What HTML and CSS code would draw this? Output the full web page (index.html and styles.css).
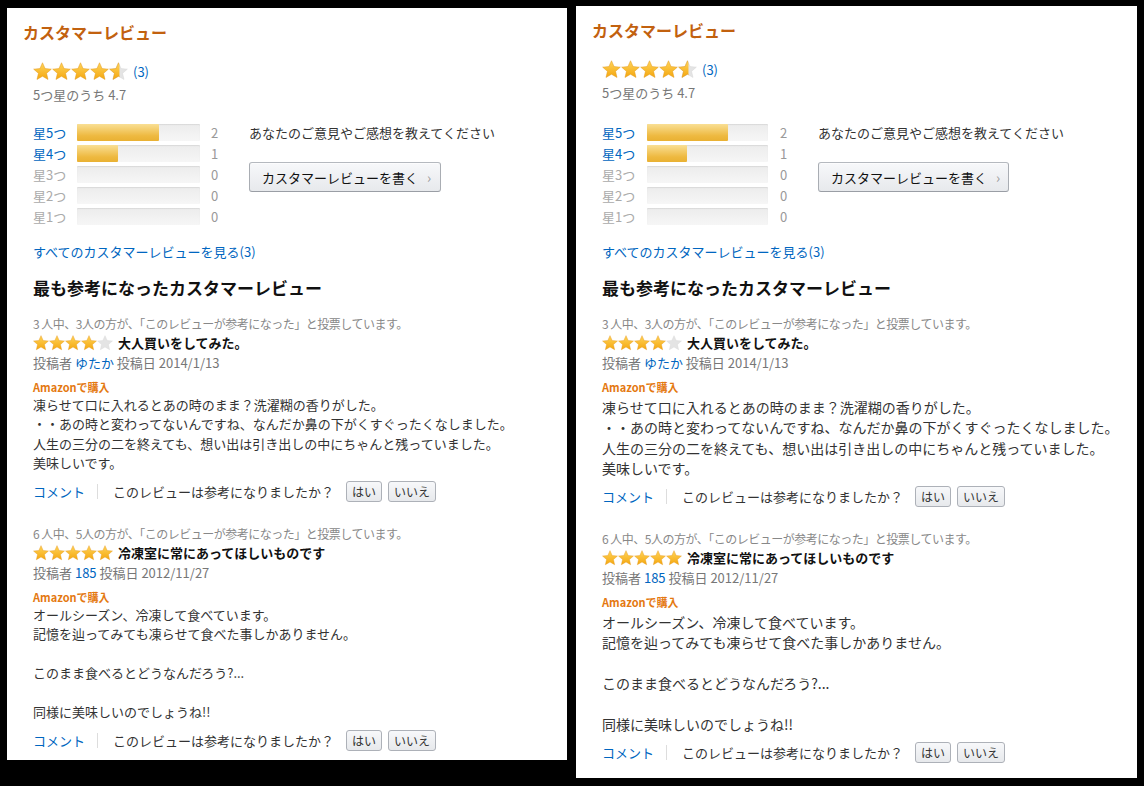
FILE: index.html
```html
<!DOCTYPE html>
<html lang="ja">
<head>
<meta charset="utf-8">
<title>カスタマーレビュー</title>
<link rel="stylesheet" href="styles.css">
</head>
<body>
<svg class="defs" width="0" height="0" aria-hidden="true">
  <defs>
    <linearGradient id="gold" x1="0" y1="0" x2="0" y2="1">
      <stop offset="0" stop-color="#ffd45a"/>
      <stop offset="1" stop-color="#f4a70f"/>
    </linearGradient>
    <clipPath id="halfclip" clipPathUnits="userSpaceOnUse"><rect x="80" y="0" width="11" height="20"/></clipPath>
    <polygon id="star" points="10,0.8 12.7,6.9 19.3,7.5 14.3,11.9 15.8,18.4 10,15 4.2,18.4 5.7,11.9 0.7,7.5 7.3,6.9"/>
  </defs>
</svg>
<div class="stage">
  <section class="panel panel-a">
    <h2 class="title">カスタマーレビュー</h2>
    <div class="content">
      <div class="summary">
        <svg class="stars-lg" width="95" height="19" viewBox="0 0 100 20">
          <use href="#star" class="on" x="0"/><use href="#star" class="on" x="20"/><use href="#star" class="on" x="40"/><use href="#star" class="on" x="60"/><use href="#star" class="off" x="80"/>
          <g clip-path="url(#halfclip)"><use href="#star" class="on" x="80"/></g>
        </svg>
        <a class="link count-link">(3)</a>
      </div>
      <div class="avg">5つ星のうち 4.7</div>
      <div class="hist">
        <div class="hist-table">
          <div class="hist-row"><a class="hist-label link">星5つ</a><div class="bar"><div class="bar-fill" style="width:66.7%"></div></div><span class="hist-count">2</span></div>
          <div class="hist-row"><a class="hist-label link">星4つ</a><div class="bar"><div class="bar-fill" style="width:33.3%"></div></div><span class="hist-count">1</span></div>
          <div class="hist-row"><span class="hist-label off-label">星3つ</span><div class="bar"></div><span class="hist-count">0</span></div>
          <div class="hist-row"><span class="hist-label off-label">星2つ</span><div class="bar"></div><span class="hist-count">0</span></div>
          <div class="hist-row"><span class="hist-label off-label">星1つ</span><div class="bar"></div><span class="hist-count">0</span></div>
        </div>
        <div class="hist-side">
          <p class="side-text">あなたのご意見やご感想を教えてください</p>
          <button class="write-btn">カスタマーレビューを書く<span class="chev">›</span></button>
        </div>
      </div>
      <a class="link all-link">すべてのカスタマーレビューを見る(3)</a>
      <h3 class="section-title">最も参考になったカスタマーレビュー</h3>

      <div class="review first">
        <div class="helpful">3 人中、3人の方が、「このレビューが参考になった」と投票しています。</div>
        <div class="review-head">
          <svg class="stars-sm" width="80" height="16" viewBox="0 0 100 20">
            <use href="#star" class="on" x="0"/><use href="#star" class="on" x="20"/><use href="#star" class="on" x="40"/><use href="#star" class="on" x="60"/><use href="#star" class="off" x="80"/>
          </svg>
          <span class="review-title">大人買いをしてみた。</span>
        </div>
        <div class="byline">投稿者 <a class="link">ゆたか</a> 投稿日 2014/1/13</div>
        <div class="verified">Amazonで購入</div>
        <p class="body">凍らせて口に入れるとあの時のまま？洗濯糊の香りがした。<br>・・あの時と変わってないんですね、なんだか鼻の下がくすぐったくなしました。<br>人生の三分の二を終えても、想い出は引き出しの中にちゃんと残っていました。<br>美味しいです。</p>
        <div class="review-foot"><a class="link">コメント</a><span class="sep"></span><span class="question">このレビューは参考になりましたか？</span><button class="vote">はい</button><button class="vote">いいえ</button></div>
      </div>

      <div class="review">
        <div class="helpful">6 人中、5人の方が、「このレビューが参考になった」と投票しています。</div>
        <div class="review-head">
          <svg class="stars-sm" width="80" height="16" viewBox="0 0 100 20">
            <use href="#star" class="on" x="0"/><use href="#star" class="on" x="20"/><use href="#star" class="on" x="40"/><use href="#star" class="on" x="60"/><use href="#star" class="on" x="80"/>
          </svg>
          <span class="review-title">冷凍室に常にあってほしいものです</span>
        </div>
        <div class="byline">投稿者 <a class="link">185</a> 投稿日 2012/11/27</div>
        <div class="verified">Amazonで購入</div>
        <p class="body">オールシーズン、冷凍して食べています。<br>記憶を辿ってみても凍らせて食べた事しかありません。<br><br>このまま食べるとどうなんだろう?...<br><br>同様に美味しいのでしょうね!!</p>
        <div class="review-foot"><a class="link">コメント</a><span class="sep"></span><span class="question">このレビューは参考になりましたか？</span><button class="vote">はい</button><button class="vote">いいえ</button></div>
      </div>
    </div>
  </section>

  <section class="panel panel-b">
    <h2 class="title">カスタマーレビュー</h2>
    <div class="content">
      <div class="summary">
        <svg class="stars-lg" width="95" height="19" viewBox="0 0 100 20">
          <use href="#star" class="on" x="0"/><use href="#star" class="on" x="20"/><use href="#star" class="on" x="40"/><use href="#star" class="on" x="60"/><use href="#star" class="off" x="80"/>
          <g clip-path="url(#halfclip)"><use href="#star" class="on" x="80"/></g>
        </svg>
        <a class="link count-link">(3)</a>
      </div>
      <div class="avg">5つ星のうち 4.7</div>
      <div class="hist">
        <div class="hist-table">
          <div class="hist-row"><a class="hist-label link">星5つ</a><div class="bar"><div class="bar-fill" style="width:66.7%"></div></div><span class="hist-count">2</span></div>
          <div class="hist-row"><a class="hist-label link">星4つ</a><div class="bar"><div class="bar-fill" style="width:33.3%"></div></div><span class="hist-count">1</span></div>
          <div class="hist-row"><span class="hist-label off-label">星3つ</span><div class="bar"></div><span class="hist-count">0</span></div>
          <div class="hist-row"><span class="hist-label off-label">星2つ</span><div class="bar"></div><span class="hist-count">0</span></div>
          <div class="hist-row"><span class="hist-label off-label">星1つ</span><div class="bar"></div><span class="hist-count">0</span></div>
        </div>
        <div class="hist-side">
          <p class="side-text">あなたのご意見やご感想を教えてください</p>
          <button class="write-btn">カスタマーレビューを書く<span class="chev">›</span></button>
        </div>
      </div>
      <a class="link all-link">すべてのカスタマーレビューを見る(3)</a>
      <h3 class="section-title">最も参考になったカスタマーレビュー</h3>

      <div class="review first">
        <div class="helpful">3 人中、3人の方が、「このレビューが参考になった」と投票しています。</div>
        <div class="review-head">
          <svg class="stars-sm" width="80" height="16" viewBox="0 0 100 20">
            <use href="#star" class="on" x="0"/><use href="#star" class="on" x="20"/><use href="#star" class="on" x="40"/><use href="#star" class="on" x="60"/><use href="#star" class="off" x="80"/>
          </svg>
          <span class="review-title">大人買いをしてみた。</span>
        </div>
        <div class="byline">投稿者 <a class="link">ゆたか</a> 投稿日 2014/1/13</div>
        <div class="verified">Amazonで購入</div>
        <p class="body">凍らせて口に入れるとあの時のまま？洗濯糊の香りがした。<br>・・あの時と変わってないんですね、なんだか鼻の下がくすぐったくなしました。<br>人生の三分の二を終えても、想い出は引き出しの中にちゃんと残っていました。<br>美味しいです。</p>
        <div class="review-foot"><a class="link">コメント</a><span class="sep"></span><span class="question">このレビューは参考になりましたか？</span><button class="vote">はい</button><button class="vote">いいえ</button></div>
      </div>

      <div class="review">
        <div class="helpful">6 人中、5人の方が、「このレビューが参考になった」と投票しています。</div>
        <div class="review-head">
          <svg class="stars-sm" width="80" height="16" viewBox="0 0 100 20">
            <use href="#star" class="on" x="0"/><use href="#star" class="on" x="20"/><use href="#star" class="on" x="40"/><use href="#star" class="on" x="60"/><use href="#star" class="on" x="80"/>
          </svg>
          <span class="review-title">冷凍室に常にあってほしいものです</span>
        </div>
        <div class="byline">投稿者 <a class="link">185</a> 投稿日 2012/11/27</div>
        <div class="verified">Amazonで購入</div>
        <p class="body">オールシーズン、冷凍して食べています。<br>記憶を辿ってみても凍らせて食べた事しかありません。<br><br>このまま食べるとどうなんだろう?...<br><br>同様に美味しいのでしょうね!!</p>
        <div class="review-foot"><a class="link">コメント</a><span class="sep"></span><span class="question">このレビューは参考になりましたか？</span><button class="vote">はい</button><button class="vote">いいえ</button></div>
      </div>
    </div>
  </section>
</div>
</body>
</html>
```
FILE: styles.css
```css
* { box-sizing: border-box; }
html, body { margin: 0; padding: 0; }
body {
  background: #000;
  width: 1144px;
  height: 786px;
  overflow: hidden;
  font-family: "Noto Sans CJK JP", "Noto Sans", "Liberation Sans", sans-serif;
  color: #333;
}
.defs { position: absolute; width: 0; height: 0; }
.stage {
  display: flex;
  align-items: flex-start;
  gap: 9px;
  padding-left: 7px;
}
.panel {
  background: #fff;
  width: 560px;
  padding: 12px 16px 0;
  overflow: hidden;
}
.panel-a { margin-top: 8px; height: 752px; }
.panel-b { margin-top: 6px; height: 772px; width: 561px; }

.title {
  margin: 0;
  font-size: 16px;
  line-height: 24px;
  font-weight: bold;
  color: #c2610f;
}
.content { padding-left: 10px; }
.link { color: #0066c0; text-decoration: none; }

.summary {
  display: flex;
  align-items: center;
  height: 19px;
  margin-top: 18px;
}
.stars-lg { display: block; }
.on { fill: url(#gold); stroke: #e2961a; stroke-width: 0.5; }
.off { fill: #e4e4e4; stroke: #d6d6d6; stroke-width: 0.5; }
.count-link { font-size: 13px; line-height: 19px; margin-left: 5px; }
.avg {
  margin-top: 5px;
  font-size: 13px;
  line-height: 18px;
  color: #777;
}

.hist { display: flex; margin-top: 20px; }
.panel-b .hist { margin-top: 22px; }
.hist-table {
  width: 216px;
  display: flex;
  flex-direction: column;
  gap: 4px;
}
.hist-row {
  display: flex;
  align-items: center;
  height: 17px;
  font-size: 13px;
  line-height: 17px;
}
.hist-label { width: 44px; }
.panel-b .hist-label { width: 45px; }
.off-label { color: #aaa; }
.bar {
  width: 123px;
  height: 17px;
  background: linear-gradient(#ececec, #f6f6f6);
  box-shadow: inset 0 1px 1px rgba(0,0,0,0.08);
  border-radius: 1px;
}
.panel-b .bar { width: 121px; }
.bar-fill {
  height: 100%;
  background: linear-gradient(#f9df94, #eeb940 70%, #e9b133);
  border-radius: 1px;
}
.hist-count { margin-left: 11px; color: #999; }
.panel-b .hist-count { margin-left: 12px; }

.hist-side { display: flex; flex-direction: column; align-items: flex-start; }
.side-text {
  margin: 0;
  font-size: 13px;
  line-height: 17px;
  color: #333;
}
.write-btn {
  margin-top: 21px;
  width: 192px;
  height: 30px;
  padding: 0 0 0 12px;
  display: flex;
  align-items: center;
  font-family: inherit;
  font-size: 13px;
  color: #111;
  background: linear-gradient(#f7f8fa, #e7e9ec);
  border: 1px solid #adb1b8;
  border-color: #b5b9bf #a9adb3 #9a9ea5;
  border-radius: 3px;
  box-shadow: inset 0 1px 0 rgba(255,255,255,0.6);
}
.panel-b .write-btn { width: 191px; }
.chev { margin-left: 9px; color: #999; font-size: 14px; }

.all-link {
  display: block;
  margin-top: 18px;
  font-size: 13px;
  line-height: 18px;
}
.section-title {
  margin: 15px 0 0;
  font-size: 17px;
  line-height: 24px;
  font-weight: bold;
  color: #111;
}

.review { margin-top: 22px; }
.review.first { margin-top: 15px; }
.helpful {
  font-size: 12px;
  line-height: 17px;
  color: #888;
  letter-spacing: -0.5px;
}
.review-head {
  display: flex;
  align-items: center;
  margin-top: 2px;
  height: 18px;
}
.stars-sm { display: block; }
.review-title {
  margin-left: 5px;
  font-size: 13px;
  font-weight: bold;
  color: #111;
  line-height: 18px;
}
.byline {
  margin-top: 2px;
  font-size: 13px;
  line-height: 18px;
  color: #777;
}
.verified {
  margin-top: 7px;
  font-size: 11px;
  line-height: 16px;
  font-weight: bold;
  color: #e47911;
}
.body {
  margin: 0;
  font-size: 13px;
  line-height: 19.4px;
  color: #333;
}
.panel-b .body {
  margin-top: 2px;
  font-size: 14px;
  line-height: 20.4px;
}
.review-foot {
  display: flex;
  align-items: center;
  height: 22px;
  margin-top: 8px;
  font-size: 13px;
}
.panel-b .review-foot { margin-top: 7px; }
.sep {
  width: 1px;
  height: 15px;
  background: #ddd;
  margin: 0 15px 0 12px;
}
.question { color: #333; }
.vote {
  margin-left: 6px;
  height: 21px;
  padding: 0 5px;
  font-family: inherit;
  font-size: 12px;
  line-height: 19px;
  color: #333;
  background: linear-gradient(#f7f8fa, #e7e9ec);
  border: 1px solid #adb1b8;
  border-radius: 3px;
}
.question + .vote { margin-left: 12px; }
```
